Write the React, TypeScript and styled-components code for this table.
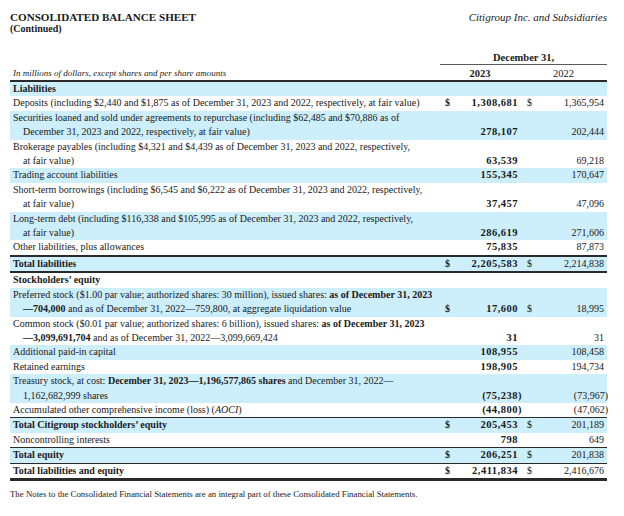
import React from "react";
import styled, { createGlobalStyle } from "styled-components";

const COLS = "430px 20px 60px 20px 67px";
const BLUE = "#cdeefb";
const INK = "#1a1a1a";
const RULE = "#2a2a2a";

const GlobalStyle = createGlobalStyle`
  html, body { margin: 0; padding: 0; background: #fff; }
  body {
    font-family: "Liberation Serif", "Times New Roman", serif;
    color: ${INK};
  }
`;

const Page = styled.div`
  width: 624px;
  box-sizing: border-box;
  padding: 10.5px 17px 0 10px;
`;

const TopBar = styled.div`
  display: flex;
  justify-content: space-between;
  align-items: flex-start;
`;

const TitleBlock = styled.div`
  display: flex;
  flex-direction: column;
`;

const Title = styled.div`
  font-size: 11.1px;
  font-weight: 700;
  line-height: 12px;
`;

const Subtitle = styled.div`
  font-size: 10px;
  font-weight: 700;
  line-height: 11px;
`;

const Company = styled.div`
  font-size: 11px;
  font-style: italic;
  line-height: 12px;
  padding-top: 0.5px;
`;

const HeaderGrid = styled.div`
  display: grid;
  grid-template-columns: ${COLS};
  margin-top: 17.5px;
  border-bottom: 2px solid ${RULE};
`;

const DateHead = styled.div`
  grid-column: 2 / 6;
  text-align: center;
  font-size: 10.5px;
  font-weight: 700;
  line-height: 13px;
  border-bottom: 1px solid #5a5a5a;
`;

const UnitsNote = styled.div`
  grid-column: 1 / 2;
  font-size: 9px;
  font-style: italic;
  line-height: 13px;
  padding: 2px 0 0 3px;
`;

const YearHead = styled.div<{ $bold?: boolean; $span: string }>`
  grid-column: ${(p) => p.$span};
  text-align: center;
  font-size: 10.5px;
  font-weight: ${(p) => (p.$bold ? 700 : 400)};
  line-height: 13px;
  padding-top: 2px;
`;

const Table = styled.div`
  display: flex;
  flex-direction: column;
  border-bottom: 3px solid ${RULE};
`;

const Row = styled.div<{ $shaded: boolean; $top?: "thin" | "thick" }>`
  display: grid;
  grid-template-columns: ${COLS};
  align-items: end;
  background: ${(p) => (p.$shaded ? BLUE : "#fff")};
  border-top: ${(p) =>
    p.$top === "thick"
      ? `2px solid ${RULE}`
      : p.$top === "thin"
      ? `1px solid ${RULE}`
      : "none"};
  line-height: 14.4px;
`;

const Label = styled.div<{ $bold?: boolean }>`
  font-size: 10px;
  font-weight: ${(p) => (p.$bold ? 700 : 400)};
  padding-left: 3px;
`;

const LabelLine = styled.span`
  display: block;
  white-space: nowrap;
  & + & {
    padding-left: 10px;
  }
`;

const Dollar = styled.div<{ $bold?: boolean; $pad: number }>`
  font-size: 10px;
  font-weight: ${(p) => (p.$bold ? 700 : 400)};
  padding-left: ${(p) => p.$pad}px;
`;

const Amount = styled.div<{ $bold?: boolean; $neg?: boolean; $pad: number }>`
  text-align: right;
  white-space: nowrap;
  font-size: ${(p) => (p.$bold ? "10.5px" : "10px")};
  font-weight: ${(p) => (p.$bold ? 700 : 400)};
  letter-spacing: ${(p) => (p.$bold ? "0.5px" : "0")};
  padding-right: ${(p) => p.$pad}px;
  margin-right: ${(p) => (p.$neg ? "-4px" : "0")};
`;

const Footer = styled.div`
  font-size: 8.8px;
  line-height: 11px;
  margin-top: 8px;
`;

type RowData = {
  lines: React.ReactNode[];
  bold?: boolean;
  dollar?: boolean;
  a?: string;
  b?: string;
  top?: "thin" | "thick";
};

const rows: RowData[] = [
  { lines: ["Liabilities"], bold: true },
  {
    lines: [
      "Deposits (including $2,440 and $1,875 as of December 31, 2023 and 2022, respectively, at fair value)",
    ],
    dollar: true,
    a: "1,308,681",
    b: "1,365,954",
  },
  {
    lines: [
      "Securities loaned and sold under agreements to repurchase (including $62,485 and $70,886 as of",
      "December 31, 2023 and 2022, respectively, at fair value)",
    ],
    a: "278,107",
    b: "202,444",
  },
  {
    lines: [
      "Brokerage payables (including $4,321 and $4,439 as of December 31, 2023 and 2022, respectively,",
      "at fair value)",
    ],
    a: "63,539",
    b: "69,218",
  },
  { lines: ["Trading account liabilities"], a: "155,345", b: "170,647" },
  {
    lines: [
      "Short-term borrowings (including $6,545 and $6,222 as of December 31, 2023 and 2022, respectively,",
      "at fair value)",
    ],
    a: "37,457",
    b: "47,096",
  },
  {
    lines: [
      "Long-term debt (including $116,338 and $105,995 as of December 31, 2023 and 2022, respectively,",
      "at fair value)",
    ],
    a: "286,619",
    b: "271,606",
  },
  { lines: ["Other liabilities, plus allowances"], a: "75,835", b: "87,873" },
  {
    lines: ["Total liabilities"],
    bold: true,
    dollar: true,
    a: "2,205,583",
    b: "2,214,838",
    top: "thick",
  },
  { lines: ["Stockholders\u2019 equity"], bold: true, top: "thick" },
  {
    lines: [
      <>
        Preferred stock ($1.00 par value; authorized shares: 30 million), issued shares:{" "}
        <b>as of December 31, 2023</b>
      </>,
      <>
        <b>{"\u2014704,000"}</b> and as of December 31, 2022{"\u2014"}759,800, at aggregate liquidation value
      </>,
    ],
    dollar: true,
    a: "17,600",
    b: "18,995",
  },
  {
    lines: [
      <>
        Common stock ($0.01 par value; authorized shares: 6 billion), issued shares:{" "}
        <b>as of December 31, 2023</b>
      </>,
      <>
        <b>{"\u20143,099,691,704"}</b> and as of December 31, 2022{"\u2014"}3,099,669,424
      </>,
    ],
    a: "31",
    b: "31",
  },
  { lines: ["Additional paid-in capital"], a: "108,955", b: "108,458" },
  { lines: ["Retained earnings"], a: "198,905", b: "194,734" },
  {
    lines: [
      <>
        Treasury stock, at cost: <b>{"December 31, 2023\u20141,196,577,865 shares"}</b> and December 31, 2022
        {"\u2014"}
      </>,
      "1,162,682,999 shares",
    ],
    a: "(75,238)",
    b: "(73,967)",
  },
  {
    lines: [
      <>
        Accumulated other comprehensive income (loss) (<i>AOCI</i>)
      </>,
    ],
    a: "(44,800)",
    b: "(47,062)",
  },
  {
    lines: ["Total Citigroup stockholders\u2019 equity"],
    bold: true,
    dollar: true,
    a: "205,453",
    b: "201,189",
    top: "thin",
  },
  { lines: ["Noncontrolling interests"], a: "798", b: "649" },
  {
    lines: ["Total equity"],
    bold: true,
    dollar: true,
    a: "206,251",
    b: "201,838",
    top: "thin",
  },
  {
    lines: ["Total liabilities and equity"],
    bold: true,
    dollar: true,
    a: "2,411,834",
    b: "2,416,676",
    top: "thin",
  },
];

export default function App() {
  return (
    <>
      <GlobalStyle />
      <Page>
        <TopBar>
          <TitleBlock>
            <Title>CONSOLIDATED BALANCE SHEET</Title>
            <Subtitle>(Continued)</Subtitle>
          </TitleBlock>
          <Company>Citigroup Inc. and Subsidiaries</Company>
        </TopBar>

        <HeaderGrid>
          <DateHead>December 31,</DateHead>
          <UnitsNote>In millions of dollars, except shares and per share amounts</UnitsNote>
          <YearHead $bold $span="2 / 4">
            2023
          </YearHead>
          <YearHead $span="4 / 6">2022</YearHead>
        </HeaderGrid>

        <Table>
          {rows.map((r, i) => (
            <Row key={i} $shaded={i % 2 === 0} $top={r.top}>
              <Label $bold={r.bold}>
                {r.lines.map((l, j) => (
                  <LabelLine key={j}>{l}</LabelLine>
                ))}
              </Label>
              <Dollar $bold $pad={5}>{r.dollar ? "$" : ""}</Dollar>
              <Amount $bold $pad={2} $neg={r.a?.startsWith("(")}>
                {r.a ?? ""}
              </Amount>
              <Dollar $pad={7}>{r.dollar ? "$" : ""}</Dollar>
              <Amount $pad={3} $neg={r.b?.startsWith("(")}>
                {r.b ?? ""}
              </Amount>
            </Row>
          ))}
        </Table>

        <Footer>
          The Notes to the Consolidated Financial Statements are an integral part of these Consolidated Financial
          Statements.
        </Footer>
      </Page>
    </>
  );
}
